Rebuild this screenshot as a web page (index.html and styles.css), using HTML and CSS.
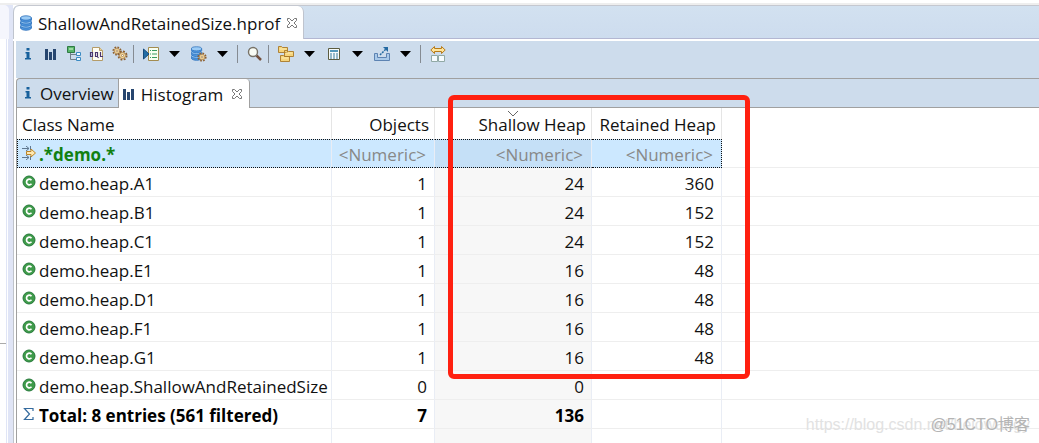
FILE: index.html
```html
<!DOCTYPE html>
<html lang="en">
<head>
<meta charset="utf-8">
<title>ShallowAndRetainedSize.hprof</title>
<link rel="stylesheet" href="styles.css">
</head>
<body>
<svg class="symbols" aria-hidden="true">
  <symbol id="info" viewBox="0 0 16 16"><path d="M6.500 2h3v2.500h-3zM5.500 6h4v6h1.500v1.500H5V12h1.500V7.500h-1z" fill="#17609c"/></symbol>
  <symbol id="bars" viewBox="0 0 16 16"><path d="M2 3h3v11H2zM6 6h3v8H6zM10 3h3v11h-3z" fill="#27466f"/></symbol>
  <symbol id="close" viewBox="0 0 12 12"><path d="M1.500 1.500h2L6 4l2.500-2.500h2v2L8 6l2.500 2.500v2h-2L6 8l-2.500 2.500h-2v-2L4 6 1.500 3.500z" fill="#fff" stroke="#777"/></symbol>
  <symbol id="db" viewBox="0 0 16 16"><g fill="#9bcbf5" stroke="#2a6fbb" stroke-width=".8"><path d="M2.500 11.500v1.500c1 3 10 3 11 0v-1.500z" fill="#4f96de"/><ellipse cx="8" cy="11" rx="5.500" ry="2"/><path d="M2.500 7v2c1 3 10 3 11 0V7z" fill="#4f96de"/><ellipse cx="8" cy="7" rx="5.500" ry="2"/><path d="M2.500 3v2c1 3 10 3 11 0V3z" fill="#4f96de"/><ellipse cx="8" cy="3" rx="5.500" ry="2.200"/></g></symbol>
  <symbol id="cls" viewBox="0 0 14 14"><circle cx="7" cy="7" r="6" fill="#3f9b4a" stroke="#25793a"/><path d="M9.500 5.300C7.500 3 4.500 4.500 4.500 7s3 4 5 1.700" fill="none" stroke="#fff" stroke-width="1.700"/></symbol>
  <symbol id="caret" viewBox="0 0 13 16"><path d="M1 5h11L6.500 11z" fill="#000"/></symbol>
  <symbol id="gear" viewBox="0 0 10 10"><circle cx="5" cy="5" r="3.800" fill="none" stroke="#8d6030" stroke-width="1.600" stroke-dasharray="1.700 1.284"/><circle cx="5" cy="5" r="2.800" fill="#f8dfa4" stroke="#a06d32" stroke-width=".7"/><circle cx="5" cy="5" r="1" fill="#fff" stroke="#8d6030" stroke-width=".6"/></symbol>
</svg>
<div class="workbench">
  <aside class="neighbor"><div class="neighbor-tab"></div><div class="neighbor-body"></div></aside>
  <main class="editor">
    <div class="file-tabs" role="tablist">
      <div class="file-tab">
        <button class="tab-label" role="tab" aria-selected="true"><svg class="icon"><use href="#db"/></svg><span>ShallowAndRetainedSize.hprof</span></button>
        <button class="close" aria-label="Close file"><svg><use href="#close"/></svg></button>
      </div>
    </div>
    <div class="content">
      <div class="toolbar" role="toolbar">
        <button aria-label="Overview"><svg><use href="#info"/></svg></button>
        <button aria-label="Histogram"><svg><use href="#bars"/></svg></button>
        <button aria-label="Dominator tree"><svg viewBox="0 0 16 16"><path d="M4.500 6v7.500H10M4.500 8.500H10" fill="none" stroke="#72808a"/><path d="M1.500.5h7v6h-7z" fill="#58b56a" stroke="#2f7b43"/><path d="M3 2h4v2H3z" fill="#9bd9a0"/><path d="M10.500 6.500h4v3h-4zM10.500 11.500h4v3h-4z" fill="#eaf7ff" stroke="#3b8ac3"/></svg></button>
        <button aria-label="Object query language"><svg viewBox="0 0 16 16"><path d="M3.500 1.500h7l3 3v10h-10z" fill="#fffdf3" stroke="#b59c69"/><path d="M10.500 1.500v3h3" fill="#e7d099" stroke="#b59c69"/><path d="M1.500 6.500h2v4h-2zM6.500 6.500h2v4h-2zM8 10l1.500 2M11.500 6v4.500H14" fill="none" stroke="#49346f" stroke-width="1.200"/></svg></button>
        <button aria-label="Thread overview"><svg viewBox="0 0 16 16"><use href="#gear" x="0" y="0" width="10" height="10"/><use href="#gear" x="5" y="4" width="11" height="11"/></svg></button>
        <span class="separator"></span>
        <button aria-label="Run report"><svg viewBox="0 0 16 16"><path d="M5.500 1.500h10v13h-10z" fill="#f8fff2" stroke="#a38c50"/><path d="M7 4.500h1M9 4.500h5M7 8h1M9 8h5M7 11.500h1M9 11.500h5" stroke="#389b60"/><path d="M.5 3v10L6 8z" fill="#226da6" stroke="#174b7c"/></svg></button>
        <button class="menu" aria-label="Report menu"><svg><use href="#caret"/></svg></button>
        <button aria-label="Query browser"><svg viewBox="0 0 16 16"><use href="#db" x="-2" y="0" width="15" height="15"/><use href="#gear" x="6" y="6" width="10" height="10"/></svg></button>
        <button class="menu" aria-label="Query menu"><svg><use href="#caret"/></svg></button>
        <span class="separator"></span>
        <button aria-label="Search"><svg viewBox="0 0 16 16"><path d="m9.500 9.500 4.500 4.500" stroke="#74513e" stroke-width="2.500"/><circle cx="6" cy="6" r="4.500" fill="#f9fcf5" stroke="#777267" stroke-width="1.400"/></svg></button>
        <span class="separator"></span>
        <button aria-label="Group result"><svg viewBox="0 0 16 16"><g fill="#f5d47c" stroke="#a97928" stroke-width=".9"><path d="M.5.5h3l1 1h5v5h-9zM6.500 4.500h3l1 1h5v5h-9zM2.500 9.500h3l1 1h5v5h-9z"/><path d="M1.500 3h7M7.500 7h7M3.500 12h7" stroke="#fff1b5"/></g></svg></button>
        <button class="menu" aria-label="Group menu"><svg><use href="#caret"/></svg></button>
        <button aria-label="Calculate retained size"><svg viewBox="0 0 16 16"><path d="M2.500 2.500h11v11h-11z" fill="#f6fbfb" stroke="#5c5c40"/><path d="M4 4h8v2H4z" fill="#5599bb"/><path d="M4 8h2m1 0h2m1 0h2M4 10h2m1 0h2m1 0h2M4 12h2m1 0h2m1 0h2" stroke="#397c9c"/></svg></button>
        <button class="menu" aria-label="Calculate menu"><svg><use href="#caret"/></svg></button>
        <button aria-label="Export"><svg viewBox="0 0 16 16"><path d="M.5 7.500h3v4h9v-4h3v7H.5z" fill="#a9c9e9" stroke="#5d83b2"/><path d="m6 9 6-6" fill="none" stroke="#2469a1" stroke-width="1.500" stroke-dasharray="2 1"/><path d="M9 1h5v5z" fill="#2469a1"/></svg></button>
        <button class="menu" aria-label="Export menu"><svg><use href="#caret"/></svg></button>
        <span class="separator"></span>
        <button aria-label="Compare"><svg viewBox="0 0 16 16"><path d="M.8 4 4.500.5v2h7v-2L15.200 4l-3.700 3.500v-2h-7v2z" fill="#ffe49b" stroke="#b67b19"/><path d="M1.500 9.500h6v6h-6zM8.500 9.500h6v6h-6z" fill="#f5fbff" stroke="#91a9a5"/></svg></button>
      </div>
      <div class="view-tabs" role="tablist">
        <button class="view-tab" role="tab" aria-selected="false"><svg class="icon"><use href="#info"/></svg><span>Overview</span></button>
        <div class="view-tab active">
          <button class="tab-label" role="tab" aria-selected="true"><svg class="icon"><use href="#bars"/></svg><span>Histogram</span></button>
          <button class="close" aria-label="Close histogram"><svg><use href="#close"/></svg></button>
        </div>
      </div>
      <div class="histogram">
        <table>
          <colgroup><col class="name-col"><col class="objects-col"><col class="shallow-col"><col class="retained-col"><col></colgroup>
          <thead><tr><th scope="col">Class Name</th><th scope="col">Objects</th><th scope="col">Shallow Heap<svg class="sort" viewBox="0 0 12 6"><path d="m1 0 5 5 5-5" fill="none" stroke="#666"/></svg></th><th scope="col">Retained Heap</th><td></td></tr></thead>
          <tbody>
            <tr class="filter"><td><svg class="row-icon" viewBox="0 0 14 14"><path d="M0 2.500h7M0 11.500h7M4 0l3 2.500L4 5M4 9l3 2.500L4 14M8.500 0v4M8.500 10v4" fill="none" stroke="#607890"/><path d="M4.500 5.500H9V3l4.500 4L9 11V8.500H4.500z" fill="#ffe8b0" stroke="#bd8425"/></svg>.*demo.*</td><td>&lt;Numeric&gt;</td><td>&lt;Numeric&gt;</td><td>&lt;Numeric&gt;</td><td></td></tr>
            <tr><td><svg class="row-icon"><use href="#cls"/></svg>demo.heap.A1</td><td>1</td><td>24</td><td>360</td><td></td></tr>
            <tr><td><svg class="row-icon"><use href="#cls"/></svg>demo.heap.B1</td><td>1</td><td>24</td><td>152</td><td></td></tr>
            <tr><td><svg class="row-icon"><use href="#cls"/></svg>demo.heap.C1</td><td>1</td><td>24</td><td>152</td><td></td></tr>
            <tr><td><svg class="row-icon"><use href="#cls"/></svg>demo.heap.E1</td><td>1</td><td>16</td><td>48</td><td></td></tr>
            <tr><td><svg class="row-icon"><use href="#cls"/></svg>demo.heap.D1</td><td>1</td><td>16</td><td>48</td><td></td></tr>
            <tr><td><svg class="row-icon"><use href="#cls"/></svg>demo.heap.F1</td><td>1</td><td>16</td><td>48</td><td></td></tr>
            <tr><td><svg class="row-icon"><use href="#cls"/></svg>demo.heap.G1</td><td>1</td><td>16</td><td>48</td><td></td></tr>
            <tr><td><svg class="row-icon"><use href="#cls"/></svg>demo.heap.ShallowAndRetainedSize</td><td>0</td><td>0</td><td></td><td></td></tr>
            <tr class="total"><td><svg class="row-icon" viewBox="0 0 14 14"><path d="M11 4V1.500H2.500L7.500 7l-5 5.500H11V10" fill="none" stroke="#356b9e" stroke-width="1.200"/></svg>Total: 8 entries (561 filtered)</td><td>7</td><td>136</td><td></td><td></td></tr>
            <tr class="blank"><td></td><td></td><td></td><td></td><td></td></tr>
          </tbody>
        </table>
        <div class="highlight"></div>
      </div>
    </div>
  </main>
  <div class="watermark"><span>https://blog.csdn.net/heiowangy</span><span class="site">@51CTO博客</span></div>
</div>
</body>
</html>
```
FILE: styles.css
```css
* { box-sizing: border-box; }
body { margin: 0; background: #fff; color: #111; font: 17px/24px "Open Sans", "Noto Sans", sans-serif; }
button { margin: 0; padding: 0; border: 0; background: transparent; color: inherit; font: inherit; }
svg { display: block; flex: none; }
.symbols { position: absolute; width: 0; height: 0; }
.workbench { position: relative; display: flex; min-height: 100vh; overflow: hidden; border-top: 3px solid #fff; }
.neighbor { display: flex; flex-direction: column; flex: 0 0 13px; padding-top: 2px; background: linear-gradient(#eee 2px, #e0e5f6 2px); }
.neighbor-tab { width: 9px; height: 34px; background: #f5f6fd; border-radius: 0 5px 0 0; }
.neighbor-body { flex: 1; width: 9px; background: #fff; border-right: 3px double #e0e5f6; background-image: linear-gradient(#aaa, #aaa); background-size: 6px 1px; background-position: 0 304px; background-repeat: no-repeat; }
.editor { flex: 1; min-width: 0; display: flex; flex-direction: column; border-top: 2px solid #eee; }
.file-tabs { display: flex; height: 36px; border-top: 1px solid #c5c8d0; border-bottom: 2px solid #fff; background: linear-gradient(#d2e1f0, #cddcee); box-shadow: inset 0 -1px #b3b7d2; border-radius: 6px 0 0; }
.file-tab { display: flex; align-items: center; gap: 6px; padding: 0 5px 0 4px; border: 1px solid #bfc4ce; border-width: 0 1px; border-radius: 6px 6px 0 0; background: #fff; }
.tab-label { display: flex; align-items: center; gap: 4px; }
.tab-label span, .view-tab > span { padding-top: 2px; }
.icon { width: 16px; height: 16px; }
.close svg { width: 12px; height: 12px; }
.content { flex: 1; display: flex; flex-direction: column; border-left: 1px solid #bfc3ca; padding-left: 2px; }
.toolbar { display: flex; align-items: center; gap: 7px; height: 37px; padding: 0 4px 12px; background: #cddcec; }
.toolbar svg { width: 16px; height: 16px; }
.toolbar .menu { margin: 0 3px 0 2px; }
.toolbar .menu svg { width: 13px; }
.separator { width: 1px; height: 18px; margin: 0 2px 0 -2px; background: #858b92; }
.view-tabs { display: flex; height: 30px; border: 1px solid #a0a0a0; border-right: 0; border-radius: 4px 0 0; background: #cddcec; }
.view-tab { display: flex; align-items: center; gap: 4px; padding: 0 4px 0 3px; }
.view-tab.active { gap: 8px; margin-bottom: -1px; background: #fff; border: 1px solid #a0a0a0; border-width: 0 1px; border-radius: 0 4px 0 0; padding: 0 6px 0 2px; }
.histogram { position: relative; flex: 1; border-left: 1px solid #a0a0a0; }
table { width: 100%; table-layout: fixed; border-collapse: separate; border-spacing: 0; }
.name-col { width: 315px; }
.objects-col { width: 103px; }
.shallow-col { width: 157px; }
.retained-col { width: 130px; }
th, td { height: 29px; padding: 3px 7px 0 0; border-right: 1px solid #e9edf5; border-bottom: 1px solid #eee; font-weight: 400; text-align: right; white-space: nowrap; }
thead th, thead td { position: relative; height: 31px; padding-right: 5px; padding-top: 4px; border-bottom-color: #fff; border-right-color: #e5e5e5; }
th:first-child, td:first-child { padding-right: 0; padding-left: 5px; text-align: left; }
th:last-child, td:last-child { border-right: 0; }
tbody td:nth-child(3) { background: #f7f7f7; }
.row-icon { display: inline-block; width: 14px; height: 14px; margin-right: 3px; vertical-align: 1px; }
.filter td { padding-top: 2px; padding-right: 8px; background: #cce8ff; color: #888; border-top: 1px dotted #111; border-bottom: 1px dotted #111; }
.filter td:nth-child(3) { background: #c5e0f7; }
.filter td:first-child { color: #118011; font-weight: 700; border-left: 1px dotted #111; padding-left: 4px; }
.filter td:nth-child(4) { border-right: 1px dotted #111; }
.filter td:last-child { background: #fff; border-top-color: #fff; border-bottom: 1px solid #eee; }
.total td { font-weight: 700; color: #000; }
.blank td { height: 14px; border-bottom: 0; }
.sort { position: absolute; top: 3px; left: 72px; width: 12px; height: 6px; }
.highlight { position: absolute; left: 431px; top: -13px; width: 302px; height: 284px; border: 5px solid #ff2010; border-radius: 6px; }
.watermark { position: absolute; right: 9px; bottom: 6px; display: flex; color: #e2e2e2; font: 16px/24px "Liberation Sans", "Noto Sans CJK SC", sans-serif; }
.watermark .site { position: absolute; right: 0; color: #b4b4b4; }
```
